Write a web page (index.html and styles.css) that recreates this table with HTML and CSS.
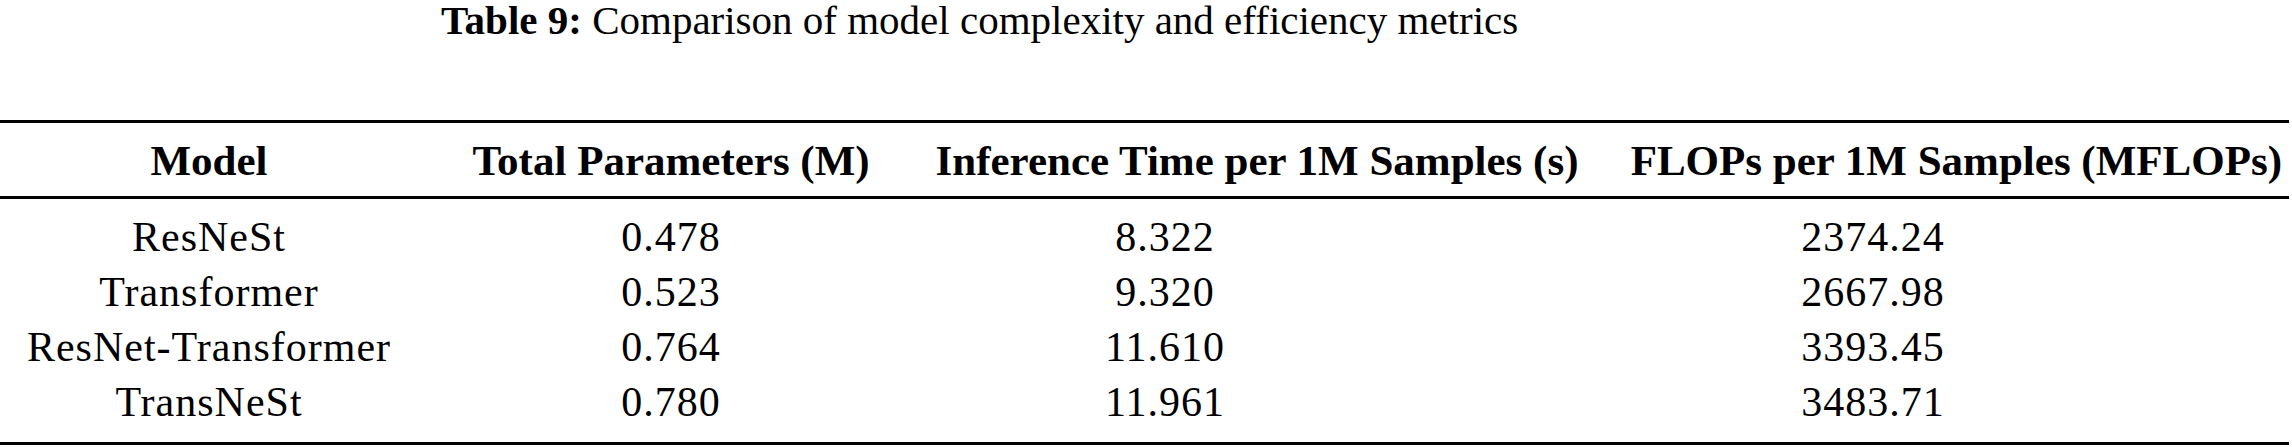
FILE: index.html
```html
<!DOCTYPE html>
<html lang="en">
<head>
<meta charset="utf-8">
<title>Table 9</title>
<link rel="stylesheet" href="styles.css">
</head>
<body>
<div class="page">
  <p class="caption"><b class="caption-label">Table 9:</b> Comparison of model complexity and efficiency metrics</p>
  <table class="metrics">
    <colgroup>
      <col class="col-model">
      <col class="col-params">
      <col class="col-time">
      <col class="col-flops">
    </colgroup>
    <thead>
      <tr>
        <th>Model</th>
        <th>Total Parameters (M)</th>
        <th>Inference Time per 1M Samples (s)</th>
        <th class="h-flops">FLOPs per 1M Samples (MFLOPs)</th>
      </tr>
    </thead>
    <tbody>
      <tr class="first">
        <td>ResNeSt</td><td>0.478</td><td class="v-time">8.322</td><td class="v-flops">2374.24</td>
      </tr>
      <tr>
        <td>Transformer</td><td>0.523</td><td class="v-time">9.320</td><td class="v-flops">2667.98</td>
      </tr>
      <tr>
        <td>ResNet-Transformer</td><td>0.764</td><td class="v-time">11.610</td><td class="v-flops">3393.45</td>
      </tr>
      <tr class="last">
        <td>TransNeSt</td><td>0.780</td><td class="v-time">11.961</td><td class="v-flops">3483.71</td>
      </tr>
    </tbody>
  </table>
</div>
</body>
</html>
```

FILE: styles.css
```css
html, body {
  margin: 0;
  padding: 0;
  background: #ffffff;
}

.page {
  width: 2289px;
  height: 447px;
  font-family: "Liberation Serif", "Times New Roman", serif;
  color: #000000;
}

.caption {
  margin: 0;
  padding-left: 441px;
  font-size: 41px;
  line-height: 40px;
  white-space: nowrap;
}

.caption-label {
  font-weight: bold;
}

.metrics {
  margin-top: 80px;
  width: 2289px;
  table-layout: fixed;
  border-collapse: separate;
  border-spacing: 0;
}

.col-model { width: 418px; }
.col-params { width: 506px; }
.col-time { width: 666px; }
.col-flops { width: 699px; }

.metrics th {
  font-size: 43px;
  font-weight: bold;
  line-height: 52px;
  padding: 12px 0 9px;
  text-align: center;
  white-space: nowrap;
  border-top: 3px solid #000;
  border-bottom: 3px solid #000;
}

.metrics th.h-flops {
  text-align: right;
  padding-right: 7px;
}

.metrics td {
  font-size: 42px;
  letter-spacing: 1px;
  line-height: 55px;
  padding: 0;
  text-align: center;
  white-space: nowrap;
}

.metrics td.v-time {
  padding-right: 184px;
}

.metrics td.v-flops {
  padding-right: 133px;
}

.metrics tr.first td {
  padding-top: 11px;
}

.metrics tr.last td {
  padding-bottom: 12px;
  border-bottom: 3px solid #000;
}
```
